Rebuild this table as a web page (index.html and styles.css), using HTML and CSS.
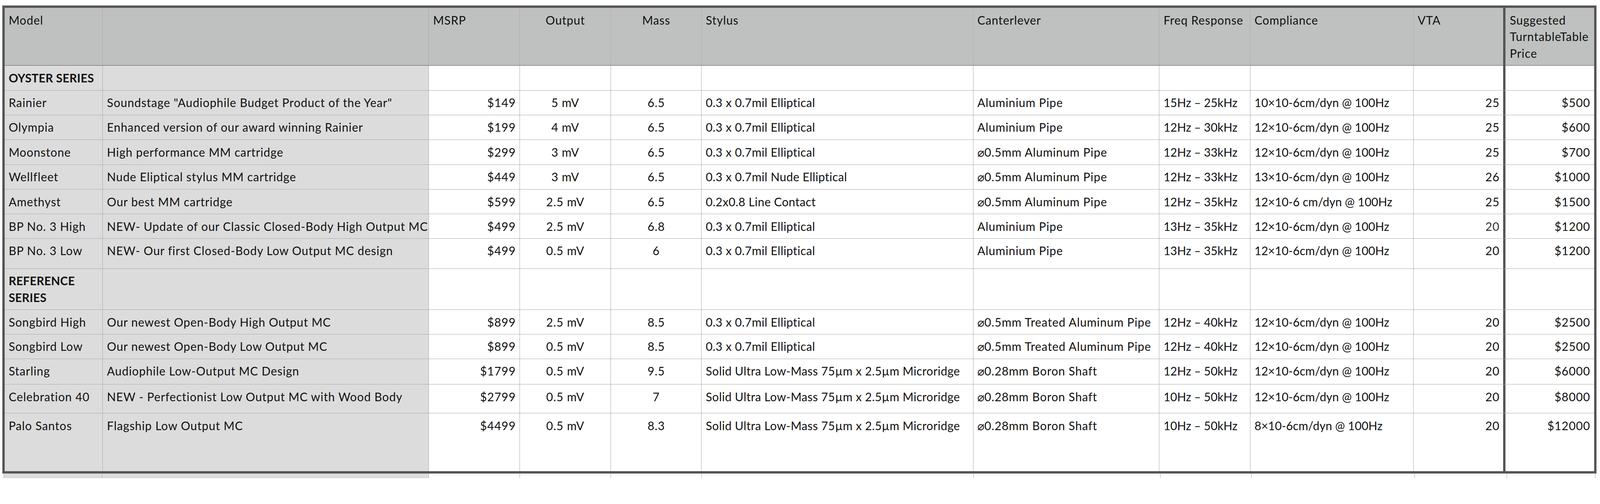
FILE: index.html
```html
<!DOCTYPE html>
<html>
<head>
<meta charset="utf-8">
<title>Cartridge Lineup</title>
<link rel="stylesheet" href="styles.css">
</head>
<body>
<div class="sheet">
  <div class="row head">
    <div class="cell">Model</div><div class="cell"></div><div class="cell">MSRP</div><div class="cell c">Output</div><div class="cell c">Mass</div><div class="cell">Stylus</div>
    <div class="cell">Canterlever</div><div class="cell">Freq Response</div><div class="cell">Compliance</div><div class="cell vta">VTA</div><div class="cell last">Suggested TurntableTable Price</div>
  </div>
  <div class="row h67">
    <div class="cell g b">OYSTER SERIES</div><div class="cell g"></div><div class="cell"></div><div class="cell"></div><div class="cell"></div><div class="cell"></div><div class="cell"></div><div class="cell"></div><div class="cell"></div><div class="cell vta"></div><div class="cell last"></div>
  </div>
  <div class="row">
    <div class="cell g">Rainier</div><div class="cell g">Soundstage "Audiophile Budget Product of the Year"</div><div class="cell r">$149</div><div class="cell c">5 mV</div><div class="cell c">6.5</div><div class="cell">0.3 x 0.7mil Elliptical</div><div class="cell">Aluminium Pipe</div><div class="cell">15Hz – 25kHz</div><div class="cell">10×10-6cm/dyn @ 100Hz</div><div class="cell vta r">25</div><div class="cell last r">$500</div>
  </div>
  <div class="row h67">
    <div class="cell g">Olympia</div><div class="cell g">Enhanced version of our award winning Rainier</div><div class="cell r">$199</div><div class="cell c">4 mV</div><div class="cell c">6.5</div><div class="cell">0.3 x 0.7mil Elliptical</div><div class="cell">Aluminium Pipe</div><div class="cell">12Hz – 30kHz</div><div class="cell">12×10-6cm/dyn @ 100Hz</div><div class="cell vta r">25</div><div class="cell last r">$600</div>
  </div>
  <div class="row h67">
    <div class="cell g">Moonstone</div><div class="cell g">High performance MM cartridge</div><div class="cell r">$299</div><div class="cell c">3 mV</div><div class="cell c">6.5</div><div class="cell">0.3 x 0.7mil Elliptical</div><div class="cell"><span class="dia">⌀</span>0.5mm Aluminum Pipe</div><div class="cell">12Hz – 33kHz</div><div class="cell">12×10-6cm/dyn @ 100Hz</div><div class="cell vta r">25</div><div class="cell last r">$700</div>
  </div>
  <div class="row h67">
    <div class="cell g">Wellfleet</div><div class="cell g">Nude Eliptical stylus MM cartridge</div><div class="cell r">$449</div><div class="cell c">3 mV</div><div class="cell c">6.5</div><div class="cell">0.3 x 0.7mil Nude Elliptical</div><div class="cell"><span class="dia">⌀</span>0.5mm Aluminum Pipe</div><div class="cell">12Hz – 33kHz</div><div class="cell">13×10-6cm/dyn @ 100Hz</div><div class="cell vta r">26</div><div class="cell last r">$1000</div>
  </div>
  <div class="row">
    <div class="cell g">Amethyst</div><div class="cell g">Our best MM cartridge</div><div class="cell r">$599</div><div class="cell c">2.5 mV</div><div class="cell c">6.5</div><div class="cell">0.2x0.8 Line Contact</div><div class="cell"><span class="dia">⌀</span>0.5mm Aluminum Pipe</div><div class="cell">12Hz – 35kHz</div><div class="cell">12×10-6 cm/dyn @ 100Hz</div><div class="cell vta r">25</div><div class="cell last r">$1500</div>
  </div>
  <div class="row">
    <div class="cell g">BP No. 3 High</div><div class="cell g">NEW- Update of our Classic Closed-Body High Output MC</div><div class="cell r">$499</div><div class="cell c">2.5 mV</div><div class="cell c">6.8</div><div class="cell">0.3 x 0.7mil Elliptical</div><div class="cell">Aluminium Pipe</div><div class="cell">13Hz – 35kHz</div><div class="cell">12×10-6cm/dyn @ 100Hz</div><div class="cell vta r soft">20</div><div class="cell last r">$1200</div>
  </div>
  <div class="row h81">
    <div class="cell g">BP No. 3 Low</div><div class="cell g">NEW- Our first Closed-Body Low Output MC design</div><div class="cell r">$499</div><div class="cell c">0.5 mV</div><div class="cell c">6</div><div class="cell">0.3 x 0.7mil Elliptical</div><div class="cell">Aluminium Pipe</div><div class="cell">13Hz – 35kHz</div><div class="cell">12×10-6cm/dyn @ 100Hz</div><div class="cell vta r">20</div><div class="cell last r">$1200</div>
  </div>
  <div class="row">
    <div class="cell g b wrap">REFERENCE SERIES</div><div class="cell g"></div><div class="cell"></div><div class="cell"></div><div class="cell"></div><div class="cell"></div><div class="cell"></div><div class="cell"></div><div class="cell"></div><div class="cell vta"></div><div class="cell last"></div>
  </div>
  <div class="row">
    <div class="cell g">Songbird High</div><div class="cell g">Our newest Open-Body High Output MC</div><div class="cell r">$899</div><div class="cell c">2.5 mV</div><div class="cell c">8.5</div><div class="cell">0.3 x 0.7mil Elliptical</div><div class="cell"><span class="dia">⌀</span>0.5mm Treated Aluminum Pipe</div><div class="cell">12Hz – 40kHz</div><div class="cell">12×10-6cm/dyn @ 100Hz</div><div class="cell vta r">20</div><div class="cell last r">$2500</div>
  </div>
  <div class="row">
    <div class="cell g">Songbird Low</div><div class="cell g">Our newest Open-Body Low Output MC</div><div class="cell r">$899</div><div class="cell c">0.5 mV</div><div class="cell c">8.5</div><div class="cell">0.3 x 0.7mil Elliptical</div><div class="cell"><span class="dia">⌀</span>0.5mm Treated Aluminum Pipe</div><div class="cell">12Hz – 40kHz</div><div class="cell">12×10-6cm/dyn @ 100Hz</div><div class="cell vta r">20</div><div class="cell last r">$2500</div>
  </div>
  <div class="row h69">
    <div class="cell g">Starling</div><div class="cell g">Audiophile Low-Output MC Design</div><div class="cell r">$1799</div><div class="cell c">0.5 mV</div><div class="cell c">9.5</div><div class="cell">Solid Ultra Low-Mass 75µm x 2.5µm Microridge</div><div class="cell"><span class="dia">⌀</span>0.28mm Boron Shaft</div><div class="cell">12Hz – 50kHz</div><div class="cell">12×10-6cm/dyn @ 100Hz</div><div class="cell vta r">20</div><div class="cell last r">$6000</div>
  </div>
  <div class="row h78">
    <div class="cell g">Celebration 40</div><div class="cell g">NEW - Perfectionist Low Output MC with Wood Body</div><div class="cell r">$2799</div><div class="cell c">0.5 mV</div><div class="cell c">7</div><div class="cell">Solid Ultra Low-Mass 75µm x 2.5µm Microridge</div><div class="cell"><span class="dia">⌀</span>0.28mm Boron Shaft</div><div class="cell">10Hz – 50kHz</div><div class="cell">12×10-6cm/dyn @ 100Hz</div><div class="cell vta r">20</div><div class="cell last r">$8000</div>
  </div>
  <div class="row h156">
    <div class="cell g">Palo Santos</div><div class="cell g">Flagship Low Output MC</div><div class="cell r">$4499</div><div class="cell c">0.5 mV</div><div class="cell c">8.3</div><div class="cell">Solid Ultra Low-Mass 75µm x 2.5µm Microridge</div><div class="cell"><span class="dia">⌀</span>0.28mm Boron Shaft</div><div class="cell">10Hz – 50kHz</div><div class="cell">8×10-6cm/dyn @ 100Hz</div><div class="cell vta r">20</div><div class="cell last r">$12000</div>
  </div>
</div>
<div class="tail">
  <div class="seg grey"></div><div class="seg grey"></div><div class="seg"></div><div class="seg"></div><div class="seg"></div><div class="seg"></div>
  <div class="seg"></div><div class="seg"></div><div class="seg"></div><div class="seg"></div><div class="seg end"></div>
</div>
</body>
</html>
```

FILE: styles.css
```css
/* one unit = one pixel of the 4314px-wide reference frame */
:root {
  --u: calc(100vw / 4314);
}

html {
  overflow: hidden;
}

html, body {
  margin: 0;
  padding: 0;
  background: #ffffff;
}

body {
  font-family: Lato, "Liberation Sans", sans-serif;
  font-size: calc(31.5 * var(--u));
  line-height: calc(45 * var(--u));
  letter-spacing: calc(1 * var(--u));
  color: #111111;
}

.sheet {
  margin: calc(15 * var(--u)) calc(10 * var(--u)) 0 calc(6 * var(--u));
  border: calc(7 * var(--u)) solid #555555;
  display: flex;
  flex-direction: column;
}

.row,
.tail {
  display: grid;
  grid-template-columns:
    minmax(0, 265fr) minmax(0, 879fr) minmax(0, 245fr) minmax(0, 245fr) minmax(0, 245fr)
    minmax(0, 732fr) minmax(0, 502fr) minmax(0, 245fr) minmax(0, 440fr) minmax(0, 248fr) minmax(0, 238fr);
}

.row {
  box-sizing: border-box;
  min-height: calc(66 * var(--u));
  border-bottom: 1px solid #aaaaaa;
}

.row:last-child { border-bottom: 0; }

.row.head {
  background: #bfc1c0;
  border-bottom: 1px solid #555555;
}

.h67 { min-height: calc(67 * var(--u)); }
.h69 { min-height: calc(69 * var(--u)); }
.h78 { min-height: calc(78 * var(--u)); }
.h81 { min-height: calc(81 * var(--u)); }
.h156 { min-height: calc(156 * var(--u)); }

.cell {
  box-sizing: border-box;
  padding: calc(10 * var(--u)) calc(10 * var(--u)) calc(10 * var(--u)) calc(11 * var(--u));
  border-right: 1px solid #aaaaaa;
  text-align: left;
  white-space: nowrap;
}

.head .cell,
.cell.wrap { white-space: normal; }

/* digit-heavy columns run a little tighter */
.row:not(.head) .cell:nth-child(6) { letter-spacing: calc(0.5 * var(--u)); }
.row:not(.head) .cell:nth-child(8) { letter-spacing: 0; }
.row:not(.head) .cell:nth-child(9) { letter-spacing: calc(0.1 * var(--u)); }

.cell.g { background: #dcdcdc; }
.cell.b { font-weight: 700; letter-spacing: calc(0.3 * var(--u)); }
.cell.r { text-align: right; }
.cell.c { text-align: center; }
.cell.soft { color: #333333; }
.cell.vta { border-right: calc(7 * var(--u)) solid #555555; }
.cell.last { border-right: 0; }

.dia { line-height: calc(20 * var(--u)); letter-spacing: 0; }

.tail {
  height: calc(12 * var(--u));
  margin: 0 calc(13 * var(--u)) 0 calc(9 * var(--u));
}

.seg {
  border-left: 1px solid #aaaaaa;
}

.seg.grey { background: #dcdcdc; }
.seg.end { border-right: 1px solid #aaaaaa; }
```
